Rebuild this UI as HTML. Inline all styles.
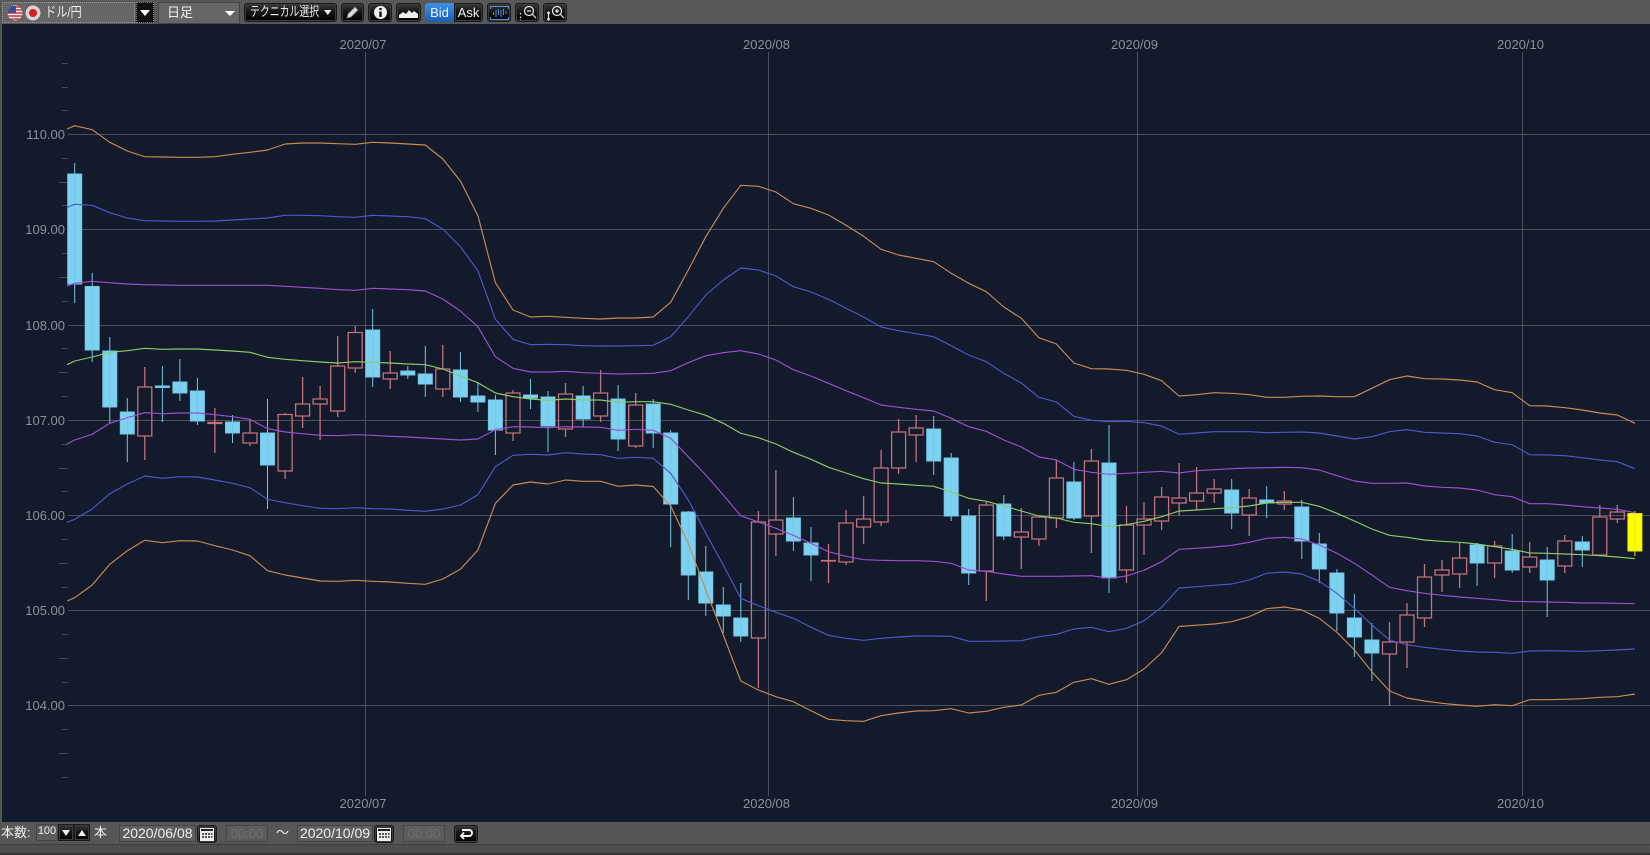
<!DOCTYPE html>
<html lang="ja"><head><meta charset="utf-8"><title>ドル/円</title>
<style>
html,body{margin:0;padding:0;width:1650px;height:855px;overflow:hidden;background:#575757}
body{position:relative;font-family:"Liberation Sans","Noto Sans CJK JP",sans-serif;color:#eee}
.a{position:absolute;box-sizing:border-box}
.btn{background:linear-gradient(#3a3a3a,#161616 45%,#000);border:1px solid #1a1a1a;border-radius:3px;box-shadow:0 0 0 1px #3c3c3c inset;display:flex;align-items:center;justify-content:center;color:#eee}
.box{background:#5e5e5e;border:1px solid #444;font-size:14px;line-height:16px;white-space:nowrap}
.dim{color:#6f6f6f;background:#5c5c5c;border:1px solid #474747;font-size:13px;text-align:center}
svg text{font-family:"Liberation Sans",sans-serif;font-size:13px;fill:#8b9099}
</style></head><body>
<div class="a" style="left:0;top:0;width:1650px;height:24px;background:#585858"></div>
<div class="a" style="left:2px;top:24px;width:1648px;height:798px;background:#121a2b"></div>
<svg class="a" style="left:0;top:0" width="1650" height="855" viewBox="0 0 1650 855">
<path fill="none" stroke="#4a505e" stroke-width="1" d="M68 134.500H1650M68 229.500H1650M68 325.500H1650M68 420.500H1650M68 515.500H1650M68 610.500H1650M68 705.500H1650M365.500 52V796M768.500 52V796M1137.500 52V796M1522.500 52V796"/>
<path fill="none" stroke="#444a57" stroke-width="1" d="M62 63.500h6M62 87.500h6M62 110.500h6M62 158.500h6M59 182.500h9M62 205.500h6M62 253.500h6M59 277.500h9M62 301.500h6M62 348.500h6M59 372.500h9M62 396.500h6M62 444.500h6M59 468.500h9M62 491.500h6M62 539.500h6M59 563.500h9M62 587.500h6M62 634.500h6M59 658.500h9M62 682.500h6M62 729.500h6M59 753.500h9M62 777.500h6"/>
<text x="65" y="139" text-anchor="end">110.00</text><text x="65" y="234" text-anchor="end">109.00</text><text x="65" y="330" text-anchor="end">108.00</text><text x="65" y="425" text-anchor="end">107.00</text><text x="65" y="520" text-anchor="end">106.00</text><text x="65" y="615" text-anchor="end">105.00</text><text x="65" y="710" text-anchor="end">104.00</text>
<text x="363" y="49" text-anchor="middle">2020/07</text><text x="766.500" y="49" text-anchor="middle">2020/08</text><text x="1134.500" y="49" text-anchor="middle">2020/09</text><text x="1520.500" y="49" text-anchor="middle">2020/10</text>
<text x="363" y="808" text-anchor="middle">2020/07</text><text x="766.500" y="808" text-anchor="middle">2020/08</text><text x="1134.500" y="808" text-anchor="middle">2020/09</text><text x="1520.500" y="808" text-anchor="middle">2020/10</text>

<path fill="#7dd2f2" stroke="#74c7e7" stroke-width="1" d="M74.7 163V303M67.7 174h14V284h-14zM92.2 273V362M85.2 286.5h14V350h-14zM109.8 337V423M102.8 351h14V407h-14zM127.3 398V462M120.3 412h14V434h-14zM162.4 366V422M155.4 386h14V387.5h-14zM179.9 359V401M172.9 382h14V393h-14zM197.4 378V425M190.4 391h14V421h-14zM232.5 415V443M225.5 422h14V433h-14zM267.5 399V509M260.5 433h14V465h-14zM372.7 309V387M365.7 330h14V377h-14zM407.8 366V379M400.8 371h14V375h-14zM425.3 346V397M418.3 374h14V384h-14zM460.4 352V402M453.4 370h14V397h-14zM477.9 383V412M470.9 396h14V402h-14zM495.4 395V455M488.4 400h14V430h-14zM530.5 379V409M523.5 395h14V398h-14zM548 391V452M541 397h14V426h-14zM583.1 386V427M576.1 396h14V419h-14zM618.1 385V451M611.1 399h14V439h-14zM653.2 399V448M646.2 404h14V433h-14zM670.7 430V547M663.7 433h14V504h-14zM688.3 511V600M681.3 512h14V575h-14zM705.8 546V616M698.8 572h14V603h-14zM723.3 587V633M716.3 605h14V616h-14zM740.8 583V642M733.8 618h14V636h-14zM793.4 497V551M786.4 518h14V541h-14zM811 527V581M804 543h14V555h-14zM933.7 416V475M926.7 429h14V461h-14zM951.2 453V521M944.2 458h14V516h-14zM968.7 509V585M961.7 516h14V573h-14zM1003.8 495V540M996.8 504h14V536h-14zM1073.9 462V520M1066.9 482h14V518h-14zM1109 425V593M1102 463h14V578h-14zM1231.7 479V529M1224.7 490h14V513h-14zM1266.7 486V518M1259.7 500h14V503h-14zM1301.8 500V559M1294.8 507h14V541h-14zM1319.3 533V583M1312.3 544h14V569h-14zM1336.9 569V631M1329.9 573h14V613h-14zM1354.4 594V657M1347.4 618h14V637h-14zM1371.9 623V681M1364.9 640h14V653h-14zM1477.1 543V586M1470.1 545h14V563h-14zM1512.2 534V573M1505.2 551h14V570h-14zM1547.2 547V617M1540.2 560h14V580h-14zM1582.3 536V567M1575.3 542h14V550h-14z"/>

<path fill="none" stroke="#c4727a" stroke-width="1.3" d="M144.8 367V387M144.8 436V460M137.8 387h14V436h-14zM214.9 408V422M214.9 424V453M207.9 422.5h14V423.5h-14zM250 419V433M250 443V446M243 433h14V443h-14zM285.1 413V414.5M285.1 471V479M278.1 414.5h14V471h-14zM302.6 377V404M302.6 416V428M295.6 404h14V416h-14zM320.1 386V399M320.1 404V440M313.1 399h14V404h-14zM337.7 336V366M337.7 411V417M330.7 366h14V411h-14zM355.2 326V332.5M355.2 368V373M348.2 332.5h14V368h-14zM390.2 351V373M390.2 379V389M383.2 373h14V379h-14zM442.8 345V369M442.8 389V397M435.8 369h14V389h-14zM513 390V393M513 433V441M506 393h14V433h-14zM565.5 383V394M565.5 429V437M558.5 394h14V429h-14zM600.6 370V393M600.6 416V422M593.6 393h14V416h-14zM635.7 393V405M635.7 446V448M628.7 405h14V446h-14zM758.4 511V522M758.4 638V688M751.4 522h14V638h-14zM775.9 470V520M775.9 534V556M768.9 520h14V534h-14zM828.5 544V583M821.5 560.5h14V561h-14zM846 510V523M846 562V565M839 523h14V562h-14zM863.6 496V519M863.6 527V544M856.6 519h14V527h-14zM881.1 450V468M881.1 522V526M874.1 468h14V522h-14zM898.6 419V432M898.6 468V474M891.6 432h14V468h-14zM916.1 415V428M916.1 435V462M909.1 428h14V435h-14zM986.3 502V505M986.3 571V601M979.3 505h14V571h-14zM1021.3 508V532M1021.3 537V569M1014.3 532h14V537h-14zM1038.9 516V517M1038.9 539V546M1031.9 517h14V539h-14zM1056.4 460V478M1056.4 518V528M1049.4 478h14V518h-14zM1091.4 449V461M1091.4 516V553M1084.4 461h14V516h-14zM1126.5 506V525M1126.5 570V583M1119.5 525h14V570h-14zM1144 502V519M1144 525V555M1137 519h14V525h-14zM1161.6 487V497M1161.6 521V530M1154.6 497h14V521h-14zM1179.1 463V498M1179.1 503V516M1172.1 498h14V503h-14zM1196.6 467V493M1196.6 501V510M1189.6 493h14V501h-14zM1214.2 479V489M1214.2 493V503M1207.2 489h14V493h-14zM1249.2 489V498M1249.2 515V536M1242.2 498h14V515h-14zM1284.3 491V501M1284.3 504V510M1277.3 501h14V504h-14zM1389.5 622V642M1389.5 654V706M1382.5 642h14V654h-14zM1407 603V615M1407 642V668M1400 615h14V642h-14zM1424.5 564V577M1424.5 618V627M1417.5 577h14V618h-14zM1442 560V570M1442 575V592M1435 570h14V575h-14zM1459.6 543V558M1459.6 574V588M1452.6 558h14V574h-14zM1494.6 541V546M1494.6 563V578M1487.6 546h14V563h-14zM1529.7 542V557M1529.7 567V573M1522.7 557h14V567h-14zM1564.8 535V541M1564.8 566V573M1557.8 541h14V566h-14zM1599.8 505V517M1599.8 555V556M1592.8 517h14V555h-14zM1617.3 505V512M1617.3 519V523M1610.3 512h14V519h-14z"/>
<path fill="#ffff00" stroke="#e6e600" stroke-width="1" d="M1634.9 511V556M1627.9 513.5h14V551h-14z"/>

<g fill="none" stroke-width="1.15" stroke-linejoin="round">
<polyline stroke="#c98a50" points="67,129 74.7,125.7 92.2,129.7 109.8,142.3 127.3,151 144.8,156.7 162.4,157 179.9,157.3 197.4,157.3 214.9,156.7 232.5,154.3 250,152.3 267.5,150 285.1,144 302.6,143 320.1,143 337.7,143.7 355.2,144.3 372.7,142.3 390.2,143 407.8,144 425.3,145 442.8,159 460.4,181 477.9,215.7 495.4,282.7 513,310 530.5,317 548,316.3 565.5,317.3 583.1,318.3 600.6,319 618.1,318 635.7,318 653.2,317 670.7,302.3 688.3,270 705.8,236.7 723.3,208.3 740.8,185.3 758.4,186.3 775.9,192 793.4,203.7 811,208.3 828.5,215 846,225.3 863.6,236.3 881.1,249.3 898.6,255 916.1,258.3 933.7,261.7 951.2,273.3 968.7,283.3 986.3,291.7 1003.8,307 1021.3,318.3 1038.9,337.7 1056.4,344 1073.9,363 1091.4,368.7 1109,369 1126.5,370.3 1144,374.3 1161.6,380.7 1179.1,396 1196.6,394.7 1214.2,392.7 1231.7,393.3 1249.2,394.7 1266.7,397.3 1284.3,397.3 1301.8,396.3 1319.3,396 1336.9,396.7 1354.4,396.7 1371.9,388.3 1389.5,379.7 1407,376 1424.5,378.7 1442,379 1459.6,380 1477.1,382 1494.6,389.7 1512.2,392.7 1529.7,405.7 1547.2,406 1564.8,407.7 1582.3,410 1599.8,413 1617.3,415 1634.9,423.3"/>
<polyline stroke="#4c58cc" points="67,207.3 74.7,204.3 92.2,205.3 109.8,212.7 127.3,218 144.8,220.7 162.4,221 179.9,221.3 197.4,221.3 214.9,221 232.5,220 250,219 267.5,218 285.1,215.3 302.6,215.3 320.1,215.7 337.7,216.7 355.2,217.3 372.7,215.3 390.2,216 407.8,216.7 425.3,218.7 442.8,229 460.4,246.7 477.9,270.7 495.4,319.3 513,339.3 530.5,344.7 548,344.3 565.5,344.7 583.1,345.7 600.6,346 618.1,346 635.7,345.7 653.2,345.3 670.7,336.7 688.3,316.7 705.8,295 723.3,280 740.8,268 758.4,270 775.9,276 793.4,286.7 811,292 828.5,299.3 846,308.3 863.6,317 881.1,327 898.6,330.7 916.1,333.7 933.7,336.7 951.2,345.7 968.7,355 986.3,361.7 1003.8,373.3 1021.3,383 1038.9,397.3 1056.4,402 1073.9,416.3 1091.4,420.3 1109,421.7 1126.5,421.3 1144,422.7 1161.6,426 1179.1,434.3 1196.6,433 1214.2,431.7 1231.7,431.7 1249.2,431.7 1266.7,432.7 1284.3,432.3 1301.8,432 1319.3,433 1336.9,436 1354.4,439 1371.9,436.7 1389.5,431.7 1407,429.7 1424.5,432.3 1442,433 1459.6,433.7 1477.1,436 1494.6,442.3 1512.2,444.7 1529.7,454.7 1547.2,455 1564.8,455.7 1582.3,457.7 1599.8,460 1617.3,461.7 1634.9,468.7"/>
<polyline stroke="#9c4fd0" points="67,286 74.7,283.3 92.2,281.3 109.8,282.7 127.3,284 144.8,284.7 162.4,285 179.9,285.3 197.4,285.3 214.9,285.3 232.5,285.3 250,285.3 267.5,285.3 285.1,286.3 302.6,287.3 320.1,288.3 337.7,289.7 355.2,290.3 372.7,288.3 390.2,289 407.8,289.7 425.3,291 442.8,299 460.4,311 477.9,326.7 495.4,356.7 513,368.3 530.5,372 548,372 565.5,371.3 583.1,372.7 600.6,373.3 618.1,374 635.7,373.7 653.2,373.3 670.7,370.7 688.3,362.7 705.8,355.7 723.3,352.7 740.8,350.7 758.4,354 775.9,360 793.4,369.7 811,376 828.5,383.3 846,390.7 863.6,397.7 881.1,405 898.6,407.3 916.1,409.3 933.7,411 951.2,418.3 968.7,426.7 986.3,431.3 1003.8,440 1021.3,447 1038.9,457 1056.4,460 1073.9,469.3 1091.4,472.3 1109,474.3 1126.5,473.3 1144,472.3 1161.6,471.3 1179.1,473 1196.6,470.7 1214.2,469.7 1231.7,468.7 1249.2,468 1266.7,467.7 1284.3,467.3 1301.8,467.7 1319.3,470 1336.9,475.7 1354.4,481 1371.9,483.3 1389.5,483.3 1407,483 1424.5,486 1442,487.3 1459.6,488 1477.1,490 1494.6,494.7 1512.2,496.7 1529.7,503.7 1547.2,503.7 1564.8,505 1582.3,506.7 1599.8,508 1617.3,509.3 1634.9,512.7"/>
<polyline stroke="#8ccb68" points="67,364.7 74.7,361 92.2,357 109.8,352.3 127.3,350.7 144.8,348.3 162.4,349.3 179.9,349 197.4,349 214.9,350 232.5,351 250,352.3 267.5,357.3 285.1,359.3 302.6,360.7 320.1,362 337.7,363 355.2,361.7 372.7,362.3 390.2,363 407.8,364 425.3,364.7 442.8,369 460.4,376 477.9,382.7 495.4,393 513,396.7 530.5,399 548,400.3 565.5,399 583.1,400 600.6,400 618.1,402.3 635.7,401.7 653.2,401.7 670.7,404.3 688.3,410 705.8,415.3 723.3,423.3 740.8,433.3 758.4,437.7 775.9,444 793.4,452.3 811,459.3 828.5,467.3 846,473 863.6,478.7 881.1,483 898.6,484 916.1,485.3 933.7,486.3 951.2,492 968.7,498.3 986.3,501.3 1003.8,506 1021.3,511 1038.9,516 1056.4,518 1073.9,522.3 1091.4,523.7 1109,526.7 1126.5,524.7 1144,521.3 1161.6,516.7 1179.1,511 1196.6,510 1214.2,508.7 1231.7,507.7 1249.2,506 1266.7,503 1284.3,502.3 1301.8,502.3 1319.3,506.3 1336.9,513.3 1354.4,521 1371.9,529 1389.5,535.3 1407,537.3 1424.5,540 1442,541.3 1459.6,542.3 1477.1,544 1494.6,546.7 1512.2,549.3 1529.7,553 1547.2,553.3 1564.8,554 1582.3,554.7 1599.8,555.7 1617.3,557 1634.9,558.7"/>
<polyline stroke="#9c4fd0" points="67,444 74.7,440 92.2,434.3 109.8,423.3 127.3,417.7 144.8,412.7 162.4,413.7 179.9,413 197.4,413 214.9,414.7 232.5,416.7 250,419.3 267.5,428.7 285.1,432 302.6,433.7 320.1,435.3 337.7,435.7 355.2,434.7 372.7,435.3 390.2,436.3 407.8,437 425.3,438 442.8,439 460.4,440 477.9,439 495.4,429.7 513,426.7 530.5,427 548,427.7 565.5,426.7 583.1,427 600.6,427.3 618.1,430.3 635.7,429.3 653.2,430.3 670.7,438.3 688.3,456.7 705.8,475 723.3,495 740.8,515.7 758.4,522 775.9,528.3 793.4,535.3 811,543.3 828.5,551.7 846,556.3 863.6,559.7 881.1,560.3 898.6,560.7 916.1,560.7 933.7,561.3 951.2,563.3 968.7,570 986.3,571.3 1003.8,574 1021.3,576.3 1038.9,576.3 1056.4,576.3 1073.9,576 1091.4,575.7 1109,578.3 1126.5,576 1144,570.3 1161.6,561.7 1179.1,549.3 1196.6,548.3 1214.2,547 1231.7,545.3 1249.2,542.3 1266.7,538.3 1284.3,537.3 1301.8,539 1319.3,545 1336.9,553.3 1354.4,563.3 1371.9,575 1389.5,587.3 1407,590.7 1424.5,593.3 1442,595.3 1459.6,597 1477.1,598.3 1494.6,599.7 1512.2,601.3 1529.7,601.7 1547.2,602 1564.8,602.3 1582.3,603 1599.8,603 1617.3,603.3 1634.9,603.7"/>
<polyline stroke="#4c58cc" points="67,522.3 74.7,519.3 92.2,509 109.8,493.7 127.3,484 144.8,476 162.4,478.3 179.9,476.7 197.4,477 214.9,480 232.5,483.3 250,487.7 267.5,499.3 285.1,502.7 302.6,505.7 320.1,508.3 337.7,508.7 355.2,507.7 372.7,508.7 390.2,509 407.8,510.3 425.3,511.3 442.8,509 460.4,505 477.9,494.7 495.4,466.7 513,455.3 530.5,454.3 548,455 565.5,452.7 583.1,454 600.6,454.7 618.1,458.3 635.7,457.3 653.2,458.3 670.7,473.3 688.3,500 705.8,533.3 723.3,565 740.8,598.3 758.4,605.7 775.9,612.3 793.4,618.3 811,627.3 828.5,635.3 846,638.3 863.6,640.3 881.1,638.3 898.6,637 916.1,636 933.7,636 951.2,636.3 968.7,641.3 986.3,641.3 1003.8,641 1021.3,640.7 1038.9,636.7 1056.4,634.3 1073.9,629 1091.4,627.3 1109,631.7 1126.5,628.3 1144,620.7 1161.6,607.3 1179.1,588 1196.6,586.7 1214.2,585.3 1231.7,584 1249.2,580 1266.7,573.3 1284.3,572 1301.8,574 1319.3,581.3 1336.9,593.3 1354.4,608.3 1371.9,625 1389.5,640 1407,644.7 1424.5,647.3 1442,649.3 1459.6,651 1477.1,652 1494.6,652.3 1512.2,653.3 1529.7,651 1547.2,650.7 1564.8,651 1582.3,651.3 1599.8,650.7 1617.3,650 1634.9,649"/>
<polyline stroke="#c98a50" points="67,601 74.7,597.7 92.2,585 109.8,564.3 127.3,550.7 144.8,540.3 162.4,542.7 179.9,540.7 197.4,541 214.9,545.7 232.5,550 250,555.7 267.5,570.7 285.1,575 302.6,578 320.1,581 337.7,581.3 355.2,580.3 372.7,581.3 390.2,582 407.8,583.3 425.3,584.3 442.8,579 460.4,569.3 477.9,550 495.4,503.3 513,485 530.5,482 548,484 565.5,480 583.1,481.3 600.6,481.3 618.1,486.3 635.7,485 653.2,486.5 670.7,506 688.3,543.3 705.8,590 723.3,635 740.8,681 758.4,690 775.9,696.7 793.4,701.7 811,710.7 828.5,719.3 846,720.7 863.6,721.3 881.1,715.7 898.6,713 916.1,711 933.7,710.7 951.2,708.7 968.7,713 986.3,711.3 1003.8,707.3 1021.3,705 1038.9,695.3 1056.4,692.3 1073.9,682.3 1091.4,678.7 1109,684.3 1126.5,679.7 1144,669 1161.6,652.7 1179.1,626.5 1196.6,625.2 1214.2,624 1231.7,621.7 1249.2,616.7 1266.7,608.7 1284.3,607 1301.8,610 1319.3,618.3 1336.9,632.3 1354.4,650 1371.9,671.7 1389.5,691 1407,698 1424.5,701 1442,703.3 1459.6,705 1477.1,706.3 1494.6,704.7 1512.2,705.7 1529.7,699.7 1547.2,699.7 1564.8,699.3 1582.3,698.7 1599.8,697.3 1617.3,696.7 1634.9,694"/>
</g>
</svg>

<!-- top toolbar -->
<div class="a" style="left:2px;top:2px;width:133px;height:21px;background:#666;border:1px dotted #999"></div>
<svg class="a" style="left:7px;top:5px" width="38" height="17" viewBox="0 0 38 17">
<defs><clipPath id="u"><circle cx="8" cy="8" r="7.500"/></clipPath></defs>
<g clip-path="url(#u)"><rect width="16" height="17" fill="#eee"/><path d="M0 2h16M0 5h16M0 8h16M0 11h16M0 14h16" stroke="#c8343c" stroke-width="1.400"/><rect width="9" height="7" y="1" fill="#3a4f96"/></g>
<circle cx="26" cy="8" r="7.500" fill="#d4d4d4"/><circle cx="26" cy="8" r="4" fill="#d81c24"/>
</svg>
<div class="a" style="left:45px;top:3px;font-size:14px;line-height:19px;color:#eee;white-space:nowrap;transform:scaleX(.8);transform-origin:left center">ドル/円</div>
<div class="a" style="left:136px;top:2px;width:18px;height:21px;background:#111;border:1px dotted #888"></div>
<svg class="a" style="left:136px;top:2px" width="18" height="21"><path d="M4 8h10l-5 6z" fill="#fff"/></svg>
<div class="a box" style="left:158px;top:2px;width:82px;height:22px;line-height:20px;font-size:13px;padding-left:8px;background:#666">日足</div>
<svg class="a" style="left:158px;top:2px" width="82" height="21"><path d="M67 9h10l-5 5z" fill="#fff"/></svg>
<div class="a btn" style="left:244px;top:3px;width:93px;height:19px"></div>
<div class="a" style="left:250px;top:3px;height:19px;font-size:13px;line-height:18px;white-space:nowrap;transform:scaleX(.76);transform-origin:left center">テクニカル選択</div>
<svg class="a" style="left:324px;top:10px" width="8" height="6"><path d="M0 0h7.500l-3.700 5z" fill="#eee"/></svg>
<div class="a btn" style="left:341px;top:3px;width:23px;height:19px"><svg width="15" height="15" viewBox="0 0 15 15"><path d="M2 13l1-4 7-7 3 3-7 7z" fill="#ddd" stroke="#777" stroke-width=".8"/></svg></div>
<div class="a btn" style="left:368px;top:3px;width:24px;height:19px"><svg width="15" height="15" viewBox="0 0 15 15"><circle cx="7.500" cy="7.500" r="6.500" fill="#eee"/><path d="M6.300 3h2.400v2h-2.400zM6.300 6.500h2.400v5.500h-2.400z" fill="#111"/></svg></div>
<div class="a btn" style="left:396px;top:3px;width:25px;height:19px"><svg width="19" height="11" viewBox="0 0 19 11"><path d="M0 11V8l4-3 3 2 3-4 3 3 2-2 4 3v4z" fill="#eee"/></svg></div>
<div class="a" style="left:425px;top:3px;width:29px;height:19px;background:linear-gradient(#3f90ea,#1a5eb0);border-radius:3px 0 0 3px;font-size:13px;line-height:20px;text-align:center;color:#e8f2ff">Bid</div>
<div class="a btn" style="left:454px;top:3px;width:29px;height:19px;font-size:13px;border-radius:0 3px 3px 0">Ask</div>
<div class="a btn" style="left:487px;top:3px;width:24px;height:19px"><svg width="19" height="14" viewBox="0 0 19 14" fill="none" stroke="#4a90d8"><path d="M.5 3V.5h18V3M.5 11v2.500h18V11"/><path d="M3.500 9V6M6 11V4M8.500 9V3M11 11V4M13.500 9V3M16 8V5"/></svg></div>
<div class="a btn" style="left:515px;top:3px;width:24px;height:19px"><svg width="21" height="16" viewBox="0 0 21 16" fill="none" stroke="#e8e8e8" stroke-width="1.200"><circle cx="12" cy="6" r="4.500"/><path d="M15.500 9.500l3.500 3.500M10 6h4"/><path d="M3.500 8v1.500M3.500 11.500v1.500M3.500 14.500v.7" /></svg></div>
<div class="a btn" style="left:543px;top:3px;width:24px;height:19px"><svg width="21" height="16" viewBox="0 0 21 16" fill="none" stroke="#e8e8e8" stroke-width="1.200"><circle cx="12" cy="6" r="4.500"/><path d="M15.500 9.500l3.500 3.500M10 6h4M12 4v4"/><path d="M3.500 7v8M2 8.500l1.500-1.500 1.500 1.500M2 13.500l1.500 1.500 1.500-1.500"/></svg></div>

<!-- bottom bar -->
<div class="a" style="left:1px;top:824px;font-size:13px;line-height:18px;color:#eee;white-space:nowrap">本数:</div>
<div class="a" style="left:36px;top:824px;width:22px;height:17px;background:#5c5c5c;border:1px solid #444;font-size:11px;line-height:13px;text-align:center;color:#eee">100</div>
<div class="a btn" style="left:58px;top:824px;width:16px;height:17px;border-radius:0"><svg width="8" height="6"><path d="M0 0h8l-4 6z" fill="#eee"/></svg></div>
<div class="a btn" style="left:74px;top:824px;width:16px;height:17px;border-radius:0"><svg width="8" height="6"><path d="M0 6h8l-4-6z" fill="#eee"/></svg></div>
<div class="a" style="left:94px;top:824px;font-size:13px;line-height:18px">本</div>
<div class="a box" style="left:119px;top:825px;width:77px;height:17px;line-height:15px;text-align:center">2020/06/08</div>
<div class="a btn" style="left:197px;top:825px;width:20px;height:18px"><svg width="14" height="13" viewBox="0 0 14 13"><rect width="14" height="13" fill="#eee"/><path d="M1 1h12v2H1z" fill="#222"/><path d="M2 5h2v2H2zM5 5h2v2H5zM8 5h2v2H8zM11 5h1.500v2H11zM2 8h2v2H2zM5 8h2v2H5zM8 8h2v2H8zM11 8h1.500v2H11z" fill="#555"/></svg></div>
<div class="a dim" style="left:226px;top:825px;width:42px;height:17px;line-height:15px">00:00</div>
<div class="a" style="left:276px;top:824px;font-size:13px;line-height:18px">〜</div>
<div class="a box" style="left:297px;top:825px;width:76px;height:17px;line-height:15px;text-align:center">2020/10/09</div>
<div class="a btn" style="left:374px;top:825px;width:20px;height:18px"><svg width="14" height="13" viewBox="0 0 14 13"><rect width="14" height="13" fill="#eee"/><path d="M1 1h12v2H1z" fill="#222"/><path d="M2 5h2v2H2zM5 5h2v2H5zM8 5h2v2H8zM11 5h1.500v2H11zM2 8h2v2H2zM5 8h2v2H5zM8 8h2v2H8zM11 8h1.500v2H11z" fill="#555"/></svg></div>
<div class="a dim" style="left:403px;top:825px;width:42px;height:17px;line-height:15px">00:00</div>
<div class="a btn" style="left:454px;top:825px;width:24px;height:18px"><svg width="14" height="12" viewBox="0 0 14 12" fill="none" stroke="#f2f2f2" stroke-width="2"><path d="M3 2h7a2.500 2.500 0 0 1 0 6H2"/><path d="M5 4.500L2 8l3 3" stroke-width="1.800"/></svg></div>
<div class="a" style="left:0;top:844px;width:1650px;height:1px;background:#3e3e3e"></div>
<div class="a" style="left:0;top:845px;width:1650px;height:8px;background:repeating-linear-gradient(90deg,#4a4a4a 0 1px,#515151 1px 2px)"></div>
<div class="a" style="left:0;top:853px;width:1650px;height:2px;background:#333"></div>
</body></html>
